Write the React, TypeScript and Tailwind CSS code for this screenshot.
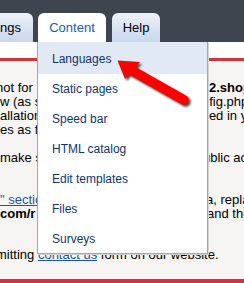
const items = ["Languages", "Static pages", "Speed bar", "HTML catalog", "Edit templates", "Files", "Surveys"];

function Row({ left, right, className = "" }: { left: React.ReactNode; right?: React.ReactNode; className?: string }) {
  return (
    <div className={`flex h-[14px] leading-[14px] whitespace-nowrap ${className}`}>
      <div className="w-[201px] shrink-0 overflow-hidden">{left}</div>
      <div className="overflow-hidden">{right}</div>
    </div>
  );
}

function Arrow() {
  return (
    <svg className="absolute left-0 top-0 pointer-events-none" width="244" height="283" viewBox="0 0 244 283">
      <defs>
        <filter id="blur" x="-20%" y="-20%" width="140%" height="140%">
          <feGaussianBlur stdDeviation="1.2" />
        </filter>
      </defs>
      <g transform="translate(2 2)" fill="#000" stroke="#000" opacity="0.7" filter="url(#blur)">
        <polygon points="117.5,60.5 140,62 125,79" strokeWidth="0" />
        <line x1="131" y1="70" x2="184" y2="100" strokeWidth="9.5" strokeLinecap="round" />
      </g>
      <g fill="#ff0000" stroke="#ff0000">
        <polygon points="117.5,60.5 140,62 125,79" strokeWidth="0" />
        <line x1="131" y1="70" x2="184" y2="100" strokeWidth="9.5" strokeLinecap="round" />
      </g>
    </svg>
  );
}

export default function App() {
  return (
    <div className="relative w-[244px] h-[283px] overflow-hidden bg-white font-['Liberation_Sans',Arial,sans-serif]">
      {/* top bar with tabs */}
      <div className="h-[42px] bg-[#3e454e] flex items-end">
        <div className="w-[33px] h-[29px] rounded-tr-[6px] bg-gradient-to-b from-[#eef2f9] to-[#c7d7ec] flex items-center justify-end pr-[12px] text-[13px] text-black">
          ings
        </div>
        <div className="ml-[5px] w-[68px] h-[29px] rounded-t-[6px] bg-white flex items-center justify-center text-[13px] text-[#1a5ea6]">
          Content
        </div>
        <div className="ml-[6px] w-[48px] h-[29px] rounded-t-[6px] bg-gradient-to-b from-[#eef2f9] to-[#c7d7ec] flex items-center justify-center text-[13px] text-black">
          Help
        </div>
      </div>
      <div className="h-[16px] bg-white" />
      <div className="h-[3px] bg-[#c9393b]" />

      {/* page body behind the menu */}
      <div className="h-[218px] bg-[#f6f5f3] pt-[20px] text-[13px] text-black">
        <Row left={<span className="ml-[-4px]">not for</span>} right={<b>p2.shop</b>} />
        <Row left={<span>w (as s</span>} right={<span className="ml-[1px]">nfig.php</span>} />
        <Row left={<span>allation</span>} right={<span className="ml-[5px]">led in your</span>} />
        <Row left={<span>es as fo</span>} />
        <Row className="mt-[14px]" left={<span>make s</span>} right={<span className="ml-[2px]">ublic access</span>} />
        <Row
          className="mt-[28px]"
          left={<span className="text-[#1a56a8] underline">" sectio</span>}
          right={<span className="ml-[5px]">a, replace</span>}
        />
        <Row left={<b>com/r</b>} right={<span className="ml-[6px]">and the</span>} />
        <div className="mt-[27px] h-[14px] leading-[14px] whitespace-nowrap ml-[-4px]">
          mitting <span className="text-[#1a56a8] underline">contact us</span> form on our website.
        </div>
      </div>
      <div className="h-[4px] bg-[#c9393b]" />

      {/* dropdown menu */}
      <div className="absolute left-[37px] top-[42px] w-[171px] bg-white border-x border-b border-[#a6a6a6] shadow-[1px_1px_0_#d4d4d4]">
        {items.map((item, i) => (
          <div
            key={item}
            className={`flex items-center pl-[14px] text-[12px] text-[#0d3473] ${
              i === 0 ? "h-[32px] pt-[2px] bg-[#e1e9f5]" : i === items.length - 1 ? "h-[29px]" : "h-[30px]"
            }`}
          >
            {item}
          </div>
        ))}
      </div>

      <Arrow />
    </div>
  );
}
